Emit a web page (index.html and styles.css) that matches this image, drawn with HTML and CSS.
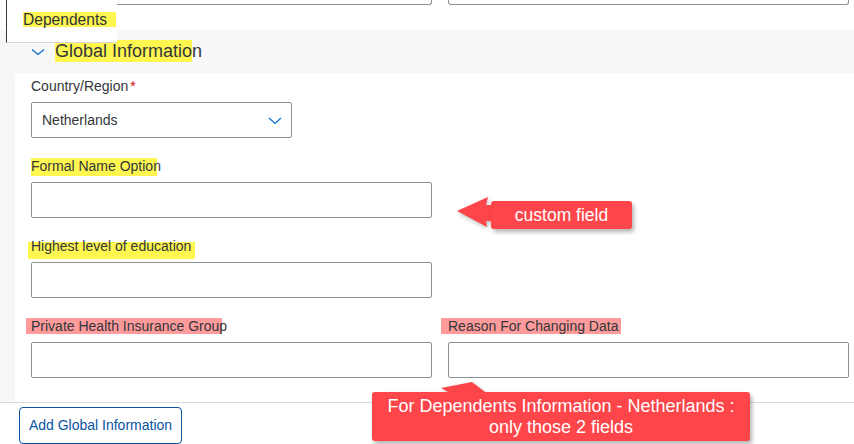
FILE: index.html
```html
<!DOCTYPE html>
<html lang="en">
<head>
<meta charset="utf-8">
<title>Global Information</title>
<link rel="stylesheet" href="styles.css">
</head>
<body>
<div class="page">
  <div class="top-row">
    <div class="stub"></div>
    <div class="stub"></div>
  </div>

  <div class="dep-tab"><span class="hl hl-dep">Dependents</span></div>

  <section class="section">
    <div class="section-head">
      <svg class="head-chev" width="14" height="8" viewBox="0 0 14 8"><path d="M1 1.5 L7 6.5 L13 1.5" fill="none" stroke="#0a6ed1" stroke-width="1.3"/></svg>
      <h2 class="section-title"><span class="hl hl-title">Global Informatio</span>n</h2>
    </div>
    <div class="section-body">
      <div class="form-grid">
        <div class="field">
          <label class="label">Country/Region<span class="req">*</span></label>
          <div class="select">
            <span class="select-value">Netherlands</span>
            <svg class="select-chev" width="14" height="8" viewBox="0 0 14 8"><path d="M1 1 L7 6.5 L13 1" fill="none" stroke="#0a6ed1" stroke-width="1.2"/></svg>
          </div>
        </div>
        <div class="field"></div>

        <div class="field">
          <label class="label"><span class="hl-formal">Formal Name Option</span></label>
          <div class="input"></div>
        </div>
        <div class="field"></div>

        <div class="field">
          <label class="label"><span class="hl-edu">Highest level of education</span></label>
          <div class="input"></div>
        </div>
        <div class="field"></div>

        <div class="field">
          <label class="label"><span class="hl-pink hl-phi">Private Health Insurance Group</span></label>
          <div class="input"></div>
        </div>
        <div class="field">
          <label class="label"><span class="hl-pink hl-reason">Reason For Changing Data</span></label>
          <div class="input"></div>
        </div>
      </div>
    </div>
  </section>

  <footer class="footer">
    <button class="btn">Add Global Information</button>
  </footer>

  <div class="callout callout-custom">
    <svg class="callout-arrow arrow-left" width="40" height="34" viewBox="0 0 40 34"><polygon points="0,14 31,0 29,8 40,8 40,24 29,24 30,30" fill="#fe4549"/></svg>
    <div class="callout-box box-custom">custom field</div>
  </div>

  <div class="callout callout-dep">
    <svg class="callout-arrow arrow-up" width="60" height="16" viewBox="0 0 60 16"><polygon points="0,6 31,0 52,16 18,16" fill="#fe4549"/></svg>
    <div class="callout-box box-dep">For Dependents Information - Netherlands :<br>only those 2 fields</div>
  </div>
</div>
</body>
</html>
```

FILE: styles.css
```css
* { box-sizing: border-box; }
html, body { margin: 0; padding: 0; }
body {
  background: #ffffff;
  font-family: "Liberation Sans", Arial, sans-serif;
  color: #32363a;
  width: 854px;
  height: 444px;
  overflow: hidden;
}
.page { position: relative; width: 854px; height: 444px; overflow: hidden; }

.top-row {
  height: 30px;
  background: #ffffff;
  display: grid;
  grid-template-columns: 401px 401px;
  column-gap: 16px;
  padding-left: 31px;
}
.stub {
  height: 5px;
  border: 1px solid #89919a;
  border-top: none;
  border-radius: 0 0 3px 3px;
}

.dep-tab {
  position: absolute;
  left: 6px;
  top: 0;
  width: 111px;
  height: 43px;
  background: #ffffff;
  border-left: 1px solid #3a3a3a;
  border-bottom: 1px solid #d8d8d8;
  padding: 12px 0 0 16px;
  font-size: 15.6px;
  line-height: 16px;
}
.hl { background: #fff650; }
.hl-dep { display: inline-block; padding: 0 9px 0 0; height: 15px; line-height: 16px; }

.section { background: #f7f7f7; }
.section-head {
  height: 43px;
  display: flex;
  align-items: center;
  padding: 0 0 1px 31px;
}
.head-chev { margin-right: 10px; margin-top: 2px; }
.section-title {
  margin: 0;
  font-size: 18px;
  font-weight: normal;
  line-height: 20px;
  color: #32363a;
}
.hl-title { padding: 1px 0; }

.section-body {
  margin-left: 15px;
  background: #ffffff;
  padding: 5px 5px 24px 16px;
}
.form-grid {
  display: grid;
  grid-template-columns: 401px 401px;
  column-gap: 16px;
  row-gap: 20px;
}
.field { display: flex; flex-direction: column; gap: 8px; }
.label {
  font-size: 14px;
  line-height: 16px;
  height: 16px;
  color: #32363a;
  white-space: nowrap;
}
.req { color: #d0021b; margin-left: 2px; }

.hl-formal {
  display: inline-block;
  padding-bottom: 2px;
  background: linear-gradient(#fff650, #fff650) no-repeat 0 0 / 126px 100%;
}
.hl-edu {
  display: inline-block;
  padding: 0 4px 5px 3px;
  margin-left: -3px;
  background: linear-gradient(#fff650, #fff650) no-repeat 0 4px / 100% 17px;
}
.hl-pink { display: inline-block; }
.hl-phi {
  padding: 0 0 0 5px;
  margin-left: -5px;
  background: linear-gradient(#ff9b9b, #ff9b9b) no-repeat 0 0 / 196px 100%;
}
.hl-reason {
  padding: 0 3px 0 7px;
  margin-left: -7px;
  background: #ff9b9b;
}

.select {
  width: 261px;
  height: 36px;
  border: 1px solid #89919a;
  border-radius: 2px;
  display: flex;
  align-items: center;
  justify-content: space-between;
  padding: 0 9px 0 10px;
  font-size: 14px;
}
.select-value { color: #32363a; }
.select-chev { margin-top: 1px; }
.input {
  height: 36px;
  border: 1px solid #89919a;
  border-radius: 2px;
  background: #ffffff;
}

.footer {
  border-top: 1px solid #d9d9d9;
  padding: 4px 0 0 19px;
  height: 42px;
  background: #ffffff;
}
.btn {
  width: 163px;
  height: 37px;
  border: 1px solid #0854a0;
  border-radius: 4px;
  background: #ffffff;
  color: #0854a0;
  font-family: "Liberation Sans", Arial, sans-serif;
  font-size: 14px;
  padding: 0 0 2px 0;
}

.callout { position: absolute; }
.callout-box {
  background: #fe4549;
  color: #ffffff;
  border-radius: 3px;
  box-shadow: 2px 3px 4px rgba(0, 0, 0, 0.3);
  text-align: center;
}
.callout-arrow { position: absolute; filter: drop-shadow(1px 2px 2px rgba(0,0,0,0.25)); }

.callout-custom { left: 457px; top: 197px; width: 176px; height: 34px; }
.arrow-left { left: 0; top: 0; }
.box-custom {
  position: absolute;
  left: 34px;
  top: 4px;
  width: 141px;
  height: 28px;
  font-size: 17.5px;
  line-height: 28px;
}

.callout-dep { left: 372px; top: 376px; width: 379px; height: 66px; }
.arrow-up { left: 69px; top: 6px; }
.box-dep {
  position: absolute;
  left: 0;
  top: 16px;
  width: 378px;
  height: 49px;
  font-size: 18px;
  line-height: 21px;
  padding-top: 4px;
}
```
